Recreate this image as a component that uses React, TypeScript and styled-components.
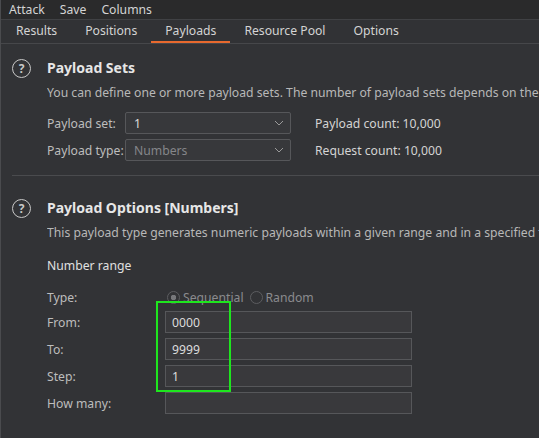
import { createGlobalStyle, styled } from 'styled-components';

const Global = createGlobalStyle`
  html, body { margin: 0; padding: 0; background: #323336; }
  body { font-family: "Noto Sans", "Open Sans", sans-serif; font-size: 12.2px; color: #d4d4d4; }
  * { box-sizing: border-box; }
`;

const Page = styled.div`
  width: 539px;
  height: 438px;
  overflow: hidden;
  background: #323336;
  border-left: 1px solid #4a4b4e;
`;

const MenuBar = styled.div`
  display: flex;
  gap: 15px;
  height: 20px;
  padding: 0 0 0 8px;
  align-items: center;
  background: #2a2a2b;
  border-bottom: 1px solid #404144;
`;

const TabBar = styled.div`
  display: flex;
  height: 24px;
  padding-left: 1px;
  background: #313235;
  border-bottom: 1px solid #46474a;
`;

const Tab = styled.div<{ $active?: boolean }>`
  padding: 0 14px;
  display: flex;
  align-items: center;
  border-bottom: 2px solid ${(p) => (p.$active ? '#e8692e' : 'transparent')};
`;

const Section = styled.div<{ $top: number }>`
  display: grid;
  grid-template-columns: 35px 1fr;
  padding: ${(p) => p.$top}px 0 0 11px;
  white-space: nowrap;
`;

const Help = styled.div`
  width: 19px;
  height: 19px;
  border: 1.5px solid #c8c8c8;
  border-radius: 50%;
  display: flex;
  align-items: center;
  justify-content: center;
  font-size: 12px;
  font-weight: bold;
  color: #c8c8c8;
  margin-top: 3px;
`;

const Title = styled.div`
  font-size: 14px;
  font-weight: bold;
  color: #e6e6e6;
  height: 22px;
  padding-top: 2px;
`;

const Desc = styled.div`
  color: #b8b8b8;
  margin-top: 6px;
  overflow: hidden;
`;

const Rows = styled.div`
  display: grid;
  grid-template-columns: 78px 166px auto;
  row-gap: 5px;
  margin-top: 11px;
  align-items: center;
`;

const Select = styled.div<{ $disabled?: boolean }>`
  height: 22px;
  border: 1px solid #56575a;
  background: #37383b;
  border-radius: 2px;
  display: flex;
  align-items: center;
  justify-content: space-between;
  padding: 0 6px 0 8px;
  color: ${(p) => (p.$disabled ? '#85868a' : '#dcdcdc')};
`;

const Count = styled.div`
  padding-left: 24px;
`;

const Divider = styled.div`
  height: 1px;
  background: #4a4b4e;
  margin: 14px 0 0 11px;
`;

const Sub = styled.div`
  margin-top: 16px;
  color: #e0e0e0;
`;

const Form = styled.div`
  display: grid;
  grid-template-columns: 118px 247px;
  row-gap: 5px;
  margin-top: 14px;
  align-items: center;
  position: relative;
`;

const Label = styled.div`
  color: #bdbdbd;
`;

const Radios = styled.div`
  display: flex;
  gap: 6px;
  color: #8a8b8e;
  height: 18px;
  align-items: center;
  padding-left: 2px;
`;

const Radio = styled.span<{ $on?: boolean }>`
  display: flex;
  align-items: center;
  gap: 3px;
  &::before {
    content: '';
    width: 11px;
    height: 11px;
    border-radius: 50%;
    border: 1px solid #5c5d60;
    background: ${(p) => (p.$on ? 'radial-gradient(circle, #77787b 0 2.5px, transparent 3px)' : 'none')};
  }
`;

const Input = styled.div`
  height: 22px;
  border: 1px solid #56575a;
  background: #39393c;
  display: flex;
  align-items: center;
  padding-left: 6px;
  color: #dcdcdc;
`;

const Highlight = styled.div`
  position: absolute;
  left: 109px;
  top: 13px;
  width: 75px;
  height: 91px;
  border: 2px solid #1ee61e;
`;

const Chevron = () => (
  <svg width="10" height="6" viewBox="0 0 10 6">
    <path d="M1 1l4 4 4-4" fill="none" stroke="#9a9a9a" strokeWidth="1" />
  </svg>
);

export default function App() {
  return (
    <Page>
      <Global />
      <MenuBar>
        <span>Attack</span>
        <span>Save</span>
        <span>Columns</span>
      </MenuBar>
      <TabBar>
        <Tab>Results</Tab>
        <Tab>Positions</Tab>
        <Tab $active>Payloads</Tab>
        <Tab>Resource Pool</Tab>
        <Tab>Options</Tab>
      </TabBar>
      <Section $top={12}>
        <Help>?</Help>
        <div>
          <Title>Payload Sets</Title>
          <Desc>You can define one or more payload sets. The number of payload sets depends on the attack type.</Desc>
          <Rows>
            <Label>Payload set:</Label>
            <Select>1<Chevron /></Select>
            <Count>Payload count: 10,000</Count>
            <Label>Payload type:</Label>
            <Select $disabled>Numbers<Chevron /></Select>
            <Count>Request count: 10,000</Count>
          </Rows>
        </div>
      </Section>
      <Divider />
      <Section $top={20}>
        <Help>?</Help>
        <div>
          <Title>Payload Options [Numbers]</Title>
          <Desc>This payload type generates numeric payloads within a given range and in a specified format.</Desc>
          <Sub>Number range</Sub>
          <Form>
            <Label>Type:</Label>
            <Radios>
              <Radio $on>Sequential</Radio>
              <Radio>Random</Radio>
            </Radios>
            <Label>From:</Label>
            <Input>0000</Input>
            <Label>To:</Label>
            <Input>9999</Input>
            <Label>Step:</Label>
            <Input>1</Input>
            <Label>How many:</Label>
            <Input />
            <Highlight />
          </Form>
        </div>
      </Section>
    </Page>
  );
}
